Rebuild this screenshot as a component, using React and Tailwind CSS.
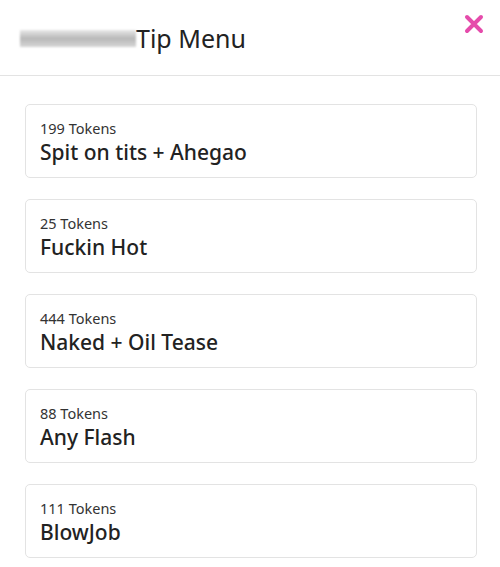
import React from "react";

const items = [
  { tokens: 199, name: "Spit on tits + Ahegao" },
  { tokens: 25, name: "Fuckin Hot" },
  { tokens: 444, name: "Naked + Oil Tease" },
  { tokens: 88, name: "Any Flash" },
  { tokens: 111, name: "BlowJob" },
];

export default function App() {
  return (
    <div
      className="w-[500px] h-[567px] bg-white text-[#212529] overflow-hidden"
      style={{ fontFamily: '"Noto Sans", "Open Sans", sans-serif' }}
    >
      <div className="h-[76px] border-b border-[#e3e3e3] flex items-start justify-between pl-5 pr-[14px]">
        <div className="flex items-center mt-[21px]">
          <div className="w-[116px] h-[17px] bg-gradient-to-b from-[#e8e8e8] via-[#b9b9b9] to-[#d6d6d6] blur-[1px]" />
          <h1 className="text-[25px] leading-[34px] text-[#222]">Tip Menu</h1>
        </div>
        <button className="mt-[12px] p-0">
          <svg width="24" height="24" viewBox="0 0 24 24">
            <path d="M5 5L19 19M19 5L5 19" stroke="#e54bab" strokeWidth="4" strokeLinecap="round" />
          </svg>
        </button>
      </div>

      <div className="pl-[25px] pr-[23px] pt-[28px] flex flex-col gap-[21px]">
        {items.map((item) => (
          <div
            key={item.name}
            className="h-[74px] border border-[#e3e3e3] rounded-[5px] px-[14px] pt-[14px]"
          >
            <div className="text-[14.5px] leading-[18px] text-[#333]">{item.tokens} Tokens</div>
            <div className="text-[21px] leading-[30px] font-medium text-[#222]">{item.name}</div>
          </div>
        ))}
      </div>
    </div>
  );
}
